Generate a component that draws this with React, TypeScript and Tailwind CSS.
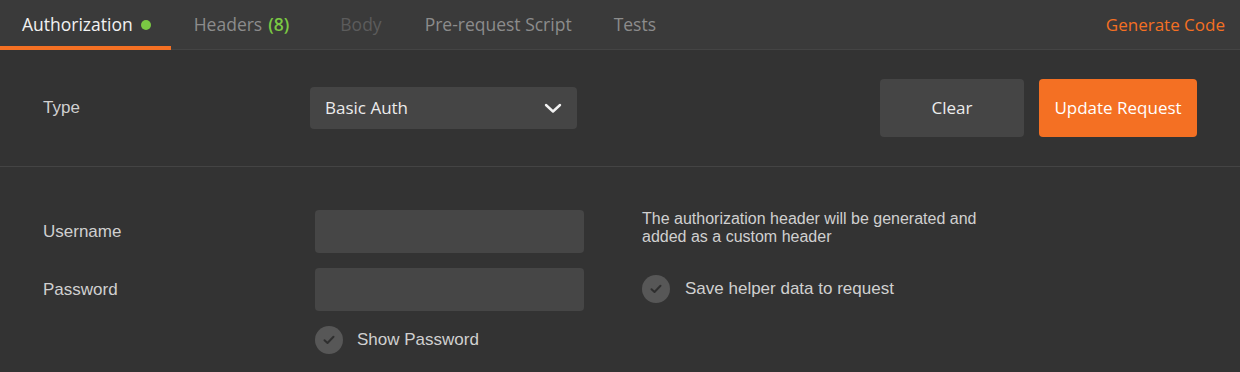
import React from "react";

const sans = { fontFamily: '"Open Sans", "Noto Sans", sans-serif' };
const helv = { fontFamily: '"Liberation Sans", Arial, sans-serif' };

function Check() {
  return (
    <span className="flex h-[28px] w-[28px] shrink-0 items-center justify-center rounded-full bg-[#575757]">
      <svg width="12" height="10" viewBox="0 0 12 10" fill="none">
        <path d="M1.5 5.2 L4.5 8 L10.5 1.8" stroke="#2f2f2f" strokeWidth="2" strokeLinecap="round" strokeLinejoin="round" />
      </svg>
    </span>
  );
}

export default function App() {
  return (
    <div className="h-[372px] w-[1240px] overflow-hidden bg-[#333333]">
      {/* Tabs */}
      <div className="flex h-[50px] items-stretch border-b border-[#444444] bg-[#3a3a3a] text-[17.5px]" style={sans}>
        <div className="relative flex items-center pl-[22px] pr-[20px] text-[#f2f2f2]">
          <span>Authorization</span>
          <span className="ml-[8px] h-[10px] w-[10px] rounded-full bg-[#7ac943]" />
          <span className="absolute bottom-[-1px] left-0 right-0 h-[4px] bg-[#f47023]" />
        </div>
        <div className="flex items-center pl-[23px] pr-[22px] text-[#8c8c8c]">
          <span>Headers</span>
          <span className="ml-[6px] font-semibold text-[#7ac943]">(8)</span>
        </div>
        <div className="flex items-center pl-[29px] pr-[22px] text-[#5c5c5c]">Body</div>
        <div className="flex items-center px-[21px] text-[#8c8c8c]">Pre-request Script</div>
        <div className="flex items-center px-[21px] text-[#8c8c8c]">Tests</div>
        <div className="flex-1" />
        <div className="flex items-center pr-[15px] text-[17px] text-[#f47023]">Generate Code</div>
      </div>

      {/* Type row */}
      <div className="flex h-[117px] items-center border-b border-[#444444] pl-[43px] pr-[43px]">
        <div className="w-[267px] text-[17px] text-[#d0d0d0]" style={helv}>Type</div>
        <div className="flex h-[42px] w-[267px] items-center justify-between rounded-[4px] bg-[#454545] pl-[15px] pr-[15px] text-[17px] text-[#ececec]" style={sans}>
          <span>Basic Auth</span>
          <svg width="18" height="11" viewBox="0 0 18 11" fill="none">
            <path d="M2 2 L9 8.5 L16 2" stroke="#f2f2f2" strokeWidth="2.4" strokeLinecap="round" strokeLinejoin="round" />
          </svg>
        </div>
        <div className="flex-1" />
        <div className="flex gap-[15px]" style={sans}>
          <button className="h-[58px] w-[144px] rounded-[4px] bg-[#454545] text-[17px] text-[#ececec]">Clear</button>
          <button className="h-[58px] w-[158px] rounded-[4px] bg-[#f47023] text-[17px] text-white">Update Request</button>
        </div>
      </div>

      {/* Fields */}
      <div className="flex pl-[43px] pt-[43px]" style={helv}>
        <div className="flex w-[272px] flex-col text-[17px] text-[#d0d0d0]">
          <div className="flex h-[43px] items-center">Username</div>
          <div className="mt-[15px] flex h-[43px] items-center">Password</div>
        </div>
        <div className="flex w-[269px] flex-col">
          <div className="h-[43px] rounded-[4px] bg-[#464646]" />
          <div className="mt-[15px] h-[43px] rounded-[4px] bg-[#464646]" />
          <div className="mt-[15px] flex items-center gap-[14px] text-[17px] text-[#d0d0d0]">
            <Check />
            <span>Show Password</span>
          </div>
        </div>
        <div className="ml-[58px] flex flex-col">
          <div className="text-[16px] leading-[18px] text-[#d0d0d0]">
            The authorization header will be generated and
            <br />
            added as a custom header
          </div>
          <div className="mt-[29px] flex items-center gap-[15px] text-[17px] text-[#d0d0d0]">
            <Check />
            <span>Save helper data to request</span>
          </div>
        </div>
      </div>
    </div>
  );
}
